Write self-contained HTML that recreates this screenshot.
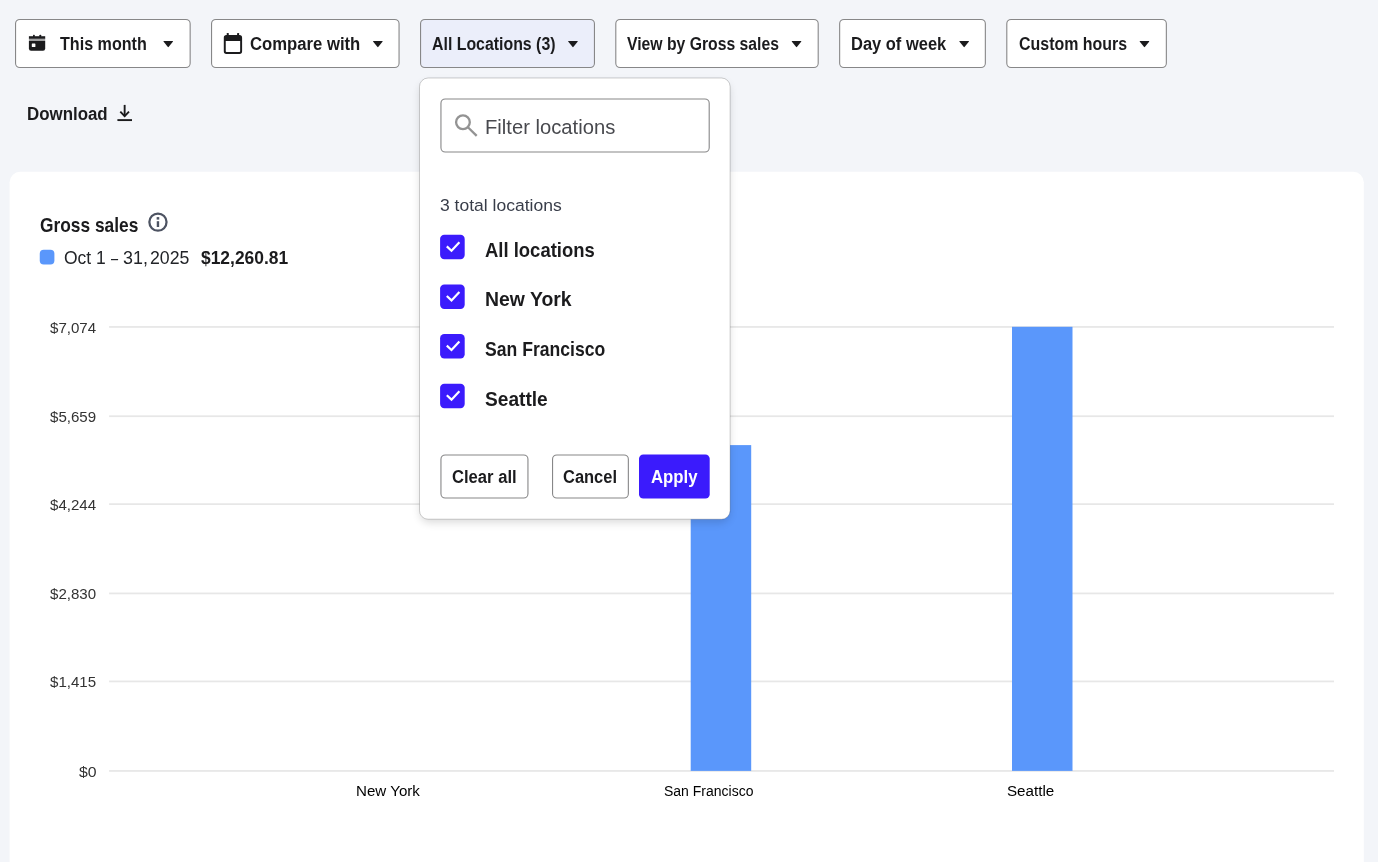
<!DOCTYPE html>
<html lang="en"><head><meta charset="utf-8"><title>Reports</title>
<style>
html,body{margin:0;padding:0;}
body{width:1378px;height:862px;overflow:hidden;background:#f3f5f9;position:relative;font-family:"Liberation Sans",sans-serif;}
svg#g{position:absolute;left:0;top:0;width:1378px;height:862px;display:block;}
.t{position:absolute;white-space:nowrap;transform-origin:0 0;font-family:"Liberation Sans",sans-serif;font-kerning:normal;}

</style></head>
<body>
<svg id="g" width="1378" height="862" viewBox="0 0 1378 862">
<defs><filter id="sh" x="-10%" y="-10%" width="120%" height="120%"><feGaussianBlur stdDeviation="4"/></filter></defs>
<rect x="9.6" y="171.8" width="1354.2" height="720" rx="10.5" fill="#ffffff"/>
<rect x="109.1" y="326.05" width="1224.9" height="1.75" fill="#e7e7e7"/>
<rect x="109.1" y="415.35" width="1224.9" height="1.75" fill="#e7e7e7"/>
<rect x="109.1" y="503.25" width="1224.9" height="1.75" fill="#e7e7e7"/>
<rect x="109.1" y="592.55" width="1224.9" height="1.75" fill="#e7e7e7"/>
<rect x="109.1" y="680.55" width="1224.9" height="1.75" fill="#e7e7e7"/>
<rect x="109.1" y="770.05" width="1224.9" height="1.75" fill="#e7e7e7"/>
<rect x="690.7" y="445.1" width="60.50" height="325.80" fill="#5a97fb"/>
<rect x="1012.0" y="326.80" width="60.50" height="444.10" fill="#5a97fb"/>
<rect x="15.55" y="19.45" width="174.60" height="48.05" rx="4.3" fill="#ffffff" stroke="#878788" stroke-width="1.1"/>
<rect x="211.55" y="19.45" width="187.50" height="48.05" rx="4.3" fill="#ffffff" stroke="#878788" stroke-width="1.1"/>
<rect x="420.55" y="19.45" width="173.90" height="48.05" rx="4.3" fill="#ebeefa" stroke="#878788" stroke-width="1.1"/>
<rect x="615.80" y="19.45" width="202.40" height="48.05" rx="4.3" fill="#ffffff" stroke="#878788" stroke-width="1.1"/>
<rect x="839.65" y="19.45" width="145.70" height="48.05" rx="4.3" fill="#ffffff" stroke="#878788" stroke-width="1.1"/>
<rect x="1006.80" y="19.45" width="159.55" height="48.05" rx="4.3" fill="#ffffff" stroke="#878788" stroke-width="1.1"/>
<path d="M163.80 41.00 H172.70 Q173.40 41.00 172.85 41.75 L168.80 46.85 Q168.25 47.40 167.70 46.85 L163.65 41.75 Q163.10 41.00 163.80 41.00Z" fill="#1b1b1d"/>
<path d="M373.40 41.00 H382.30 Q383.00 41.00 382.45 41.75 L378.40 46.85 Q377.85 47.40 377.30 46.85 L373.25 41.75 Q372.70 41.00 373.40 41.00Z" fill="#1b1b1d"/>
<path d="M568.50 41.00 H577.40 Q578.10 41.00 577.55 41.75 L573.50 46.85 Q572.95 47.40 572.40 46.85 L568.35 41.75 Q567.80 41.00 568.50 41.00Z" fill="#1b1b1d"/>
<path d="M792.10 41.00 H801.00 Q801.70 41.00 801.15 41.75 L797.10 46.85 Q796.55 47.40 796.00 46.85 L791.95 41.75 Q791.40 41.00 792.10 41.00Z" fill="#1b1b1d"/>
<path d="M959.70 41.00 H968.60 Q969.30 41.00 968.75 41.75 L964.70 46.85 Q964.15 47.40 963.60 46.85 L959.55 41.75 Q959.00 41.00 959.70 41.00Z" fill="#1b1b1d"/>
<path d="M1140.00 41.00 H1148.90 Q1149.60 41.00 1149.05 41.75 L1145.00 46.85 Q1144.45 47.40 1143.90 46.85 L1139.85 41.75 Q1139.30 41.00 1140.00 41.00Z" fill="#1b1b1d"/>
<g fill="#1b1b1d">
<rect x="33.0" y="34.7" width="1.7" height="3" rx="0.6"/><rect x="39.45" y="34.7" width="1.7" height="3" rx="0.6"/>
<path d="M28.9 36.2 H45.2 V38.9 H28.9Z"/>
<path d="M28.9 40.9 H45.2 V48.6 Q45.2 50.8 43 50.8 H31.1 Q28.9 50.8 28.9 48.6Z"/>
</g>
<rect x="28.9" y="38.8" width="16.3" height="2.2" fill="#a2a2a3"/>
<rect x="31.8" y="43.5" width="3.6" height="3.5" rx="0.5" fill="#ffffff"/>
<g fill="#1b1b1d">
<rect x="226.75" y="32.9" width="2" height="4" rx="0.6"/><rect x="237.1" y="32.9" width="2" height="4" rx="0.6"/>
<path fill-rule="evenodd" d="M226.4 35.1 H239.5 Q242.1 35.1 242.1 37.7 V51.3 Q242.1 53.9 239.5 53.9 H226.4 Q223.8 53.9 223.8 51.3 V37.7 Q223.8 35.1 226.4 35.1Z M225.75 40.95 V51.2 Q225.75 51.95 226.5 51.95 H239.4 Q240.15 51.95 240.15 51.2 V40.95Z"/>
</g>
<g fill="none" stroke="#1b1b1d" stroke-width="1.9" stroke-linecap="butt" stroke-linejoin="miter">
<path d="M124.65 104.9 V116.2"/><path d="M120.3 111.7 L124.65 116.1 L129.0 111.7"/><path d="M117.4 120.1 H132.0"/>
</g>
<rect x="39.75" y="249.8" width="14.65" height="14.65" rx="4" fill="#5a97fb"/>
<circle cx="157.95" cy="222.1" r="8.6" fill="none" stroke="#4d5362" stroke-width="2.25"/>
<rect x="156.65" y="217.1" width="2.6" height="2.5" fill="#4d5362"/><rect x="156.75" y="221.2" width="2.4" height="5.8" fill="#4d5362"/>
<rect x="420.0" y="82.5" width="309.6" height="440.2" rx="9" fill="#000" opacity="0.14" filter="url(#sh)"/>
<rect x="419.5" y="78.0" width="310.6" height="441.20000000000005" rx="8.6" fill="#ffffff" stroke="#000000" stroke-opacity="0.19" stroke-width="1"/>
<rect x="440.95" y="98.95" width="268.25" height="53.05" rx="4.3" fill="#ffffff" stroke="#878788" stroke-width="1.1"/>
<g fill="none" stroke="#939393" stroke-width="2.3"><circle cx="462.95" cy="122.25" r="6.85"/><path d="M467.9 127.2 L476.7 135.9"/></g>
<rect x="440.1" y="234.8" width="24.6" height="24.5" rx="4.2" fill="#3b1bfc"/>
<path d="M446.80 246.40 L451.50 250.80 L459.40 242.30" fill="none" stroke="#ffffff" stroke-width="2.2"/>
<rect x="440.1" y="284.4" width="24.6" height="24.5" rx="4.2" fill="#3b1bfc"/>
<path d="M446.80 296.00 L451.50 300.40 L459.40 291.90" fill="none" stroke="#ffffff" stroke-width="2.2"/>
<rect x="440.1" y="334.05" width="24.6" height="24.5" rx="4.2" fill="#3b1bfc"/>
<path d="M446.80 345.65 L451.50 350.05 L459.40 341.55" fill="none" stroke="#ffffff" stroke-width="2.2"/>
<rect x="440.1" y="383.65" width="24.6" height="24.5" rx="4.2" fill="#3b1bfc"/>
<path d="M446.80 395.25 L451.50 399.65 L459.40 391.15" fill="none" stroke="#ffffff" stroke-width="2.2"/>
<rect x="440.95" y="454.95" width="87.00" height="43.05" rx="4.3" fill="#ffffff" stroke="#878788" stroke-width="1.1"/>
<rect x="552.55" y="454.95" width="75.80" height="43.05" rx="4.3" fill="#ffffff" stroke="#878788" stroke-width="1.1"/>
<rect x="639.0" y="454.4" width="70.7" height="44.15" rx="4.3" fill="#3b1bfc"/>
</svg>
<!-- text -->
<span class="t" id="b1" style="left:59.65px;top:31px;line-height:26px;height:26px;font-size:17.6px;font-weight:700;color:#1b1b1d;transform:scaleX(0.9158)">This month</span>
<span class="t" id="b2" style="left:249.68px;top:31px;line-height:26px;height:26px;font-size:17.6px;font-weight:700;color:#1b1b1d;transform:scaleX(0.9478)">Compare with</span>
<span class="t" id="b3" style="left:431.53px;top:31px;line-height:26px;height:26px;font-size:17.6px;font-weight:700;color:#1b1b1d;transform:scaleX(0.9024)">All Locations (3)</span>
<span class="t" id="b4" style="left:626.79px;top:31px;line-height:26px;height:26px;font-size:17.6px;font-weight:700;color:#1b1b1d;transform:scaleX(0.8945)">View by Gross sales</span>
<span class="t" id="b5" style="left:850.70px;top:31px;line-height:26px;height:26px;font-size:17.6px;font-weight:700;color:#1b1b1d;transform:scaleX(0.9365)">Day of week</span>
<span class="t" id="b6" style="left:1018.63px;top:31px;line-height:26px;height:26px;font-size:17.6px;font-weight:700;color:#1b1b1d;transform:scaleX(0.9066)">Custom hours</span>
<span class="t" id="dl" style="left:26.58px;top:101px;line-height:26px;height:26px;font-size:17.6px;font-weight:700;color:#1b1b1d;transform:scaleX(0.9599)">Download</span>
<span class="t" id="fl" style="left:484.69px;top:112px;line-height:29px;height:29px;font-size:20.5px;font-weight:400;color:#48494e;transform:scaleX(0.9855)">Filter locations</span>
<span class="t" id="tl" style="left:439.79px;top:193px;line-height:25px;height:25px;font-size:16.8px;font-weight:400;color:#383d49;transform:scaleX(1.0436)">3 total locations</span>
<span class="t" id="c1" style="left:484.65px;top:235px;line-height:29px;height:29px;font-size:20.5px;font-weight:700;color:#1b1b1d;transform:scaleX(0.9004)">All locations</span>
<span class="t" id="c2" style="left:484.56px;top:284px;line-height:29px;height:29px;font-size:20.5px;font-weight:700;color:#1b1b1d;transform:scaleX(0.9464)">New York</span>
<span class="t" id="c3" style="left:484.61px;top:334px;line-height:29px;height:29px;font-size:20.5px;font-weight:700;color:#1b1b1d;transform:scaleX(0.8587)">San Francisco</span>
<span class="t" id="c4" style="left:484.76px;top:384px;line-height:29px;height:29px;font-size:20.5px;font-weight:700;color:#1b1b1d;transform:scaleX(0.9331)">Seattle</span>
<span class="t" id="p1" style="left:451.72px;top:464px;line-height:26px;height:26px;font-size:17.6px;font-weight:700;color:#1b1b1d;transform:scaleX(0.9441)">Clear all</span>
<span class="t" id="p2" style="left:562.50px;top:464px;line-height:26px;height:26px;font-size:17.6px;font-weight:700;color:#1b1b1d;transform:scaleX(0.9364)">Cancel</span>
<span class="t" id="p3" style="left:650.68px;top:464px;line-height:26px;height:26px;font-size:17.6px;font-weight:700;color:#ffffff;transform:scaleX(0.9517)">Apply</span>
<span class="t" id="gs" style="left:39.71px;top:210px;line-height:29px;height:29px;font-size:20.5px;font-weight:700;color:#1b1b1d;transform:scaleX(0.8460)">Gross sales</span>
<span class="t" id="lg1" style="left:63.76px;top:245px;line-height:26px;height:26px;font-size:17.6px;font-weight:400;color:#222428;transform:scaleX(0.9927)">Oct 1</span>
<span class="t" id="lg2" style="left:110.72px;top:245px;line-height:26px;height:26px;font-size:17.6px;font-weight:400;color:#222428;transform:scaleX(0.7247)">–</span>
<span class="t" id="lg3" style="left:122.71px;top:245px;line-height:26px;height:26px;font-size:17.6px;font-weight:400;color:#222428;transform:scaleX(1.0175)">31,</span>
<span class="t" id="lg4" style="left:149.51px;top:245px;line-height:26px;height:26px;font-size:17.6px;font-weight:400;color:#222428;transform:scaleX(1.0061)">2025</span>
<span class="t" id="lv" style="left:200.56px;top:245px;line-height:26px;height:26px;font-size:17.6px;font-weight:700;color:#1b1b1d;transform:scaleX(0.9899)">$12,260.81</span>
<span class="t" id="y1" style="left:49.91px;top:316px;line-height:23px;height:23px;font-size:15.2px;font-weight:400;color:#333333;transform:scaleX(0.9929)">$7,074</span>
<span class="t" id="y2" style="left:49.91px;top:405px;line-height:23px;height:23px;font-size:15.2px;font-weight:400;color:#333333;transform:scaleX(0.9929)">$5,659</span>
<span class="t" id="y3" style="left:49.91px;top:493px;line-height:23px;height:23px;font-size:15.2px;font-weight:400;color:#333333;transform:scaleX(0.9929)">$4,244</span>
<span class="t" id="y4" style="left:49.91px;top:582px;line-height:23px;height:23px;font-size:15.2px;font-weight:400;color:#333333;transform:scaleX(0.9929)">$2,830</span>
<span class="t" id="y5" style="left:49.91px;top:670px;line-height:23px;height:23px;font-size:15.2px;font-weight:400;color:#333333;transform:scaleX(0.9929)">$1,415</span>
<span class="t" id="y6" style="left:78.78px;top:760px;line-height:23px;height:23px;font-size:15.2px;font-weight:400;color:#333333;transform:scaleX(1.0404)">$0</span>
<span class="t" id="x1" style="left:355.76px;top:779px;line-height:23px;height:23px;font-size:15.4px;font-weight:400;color:#000000;transform:scaleX(0.9829)">New York</span>
<span class="t" id="x2" style="left:663.60px;top:779px;line-height:23px;height:23px;font-size:15.4px;font-weight:400;color:#000000;transform:scaleX(0.9089)">San Francisco</span>
<span class="t" id="x3" style="left:1006.68px;top:779px;line-height:23px;height:23px;font-size:15.4px;font-weight:400;color:#000000;transform:scaleX(0.9860)">Seattle</span>
</body></html>
